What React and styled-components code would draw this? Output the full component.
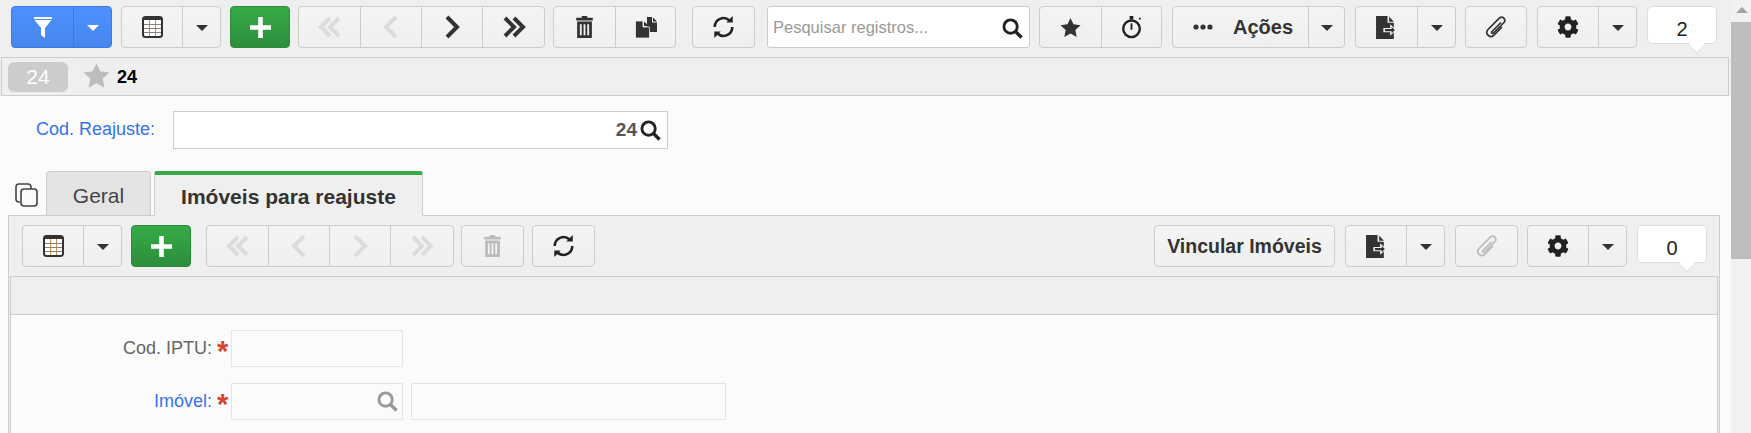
import React from "react";
import styled, { createGlobalStyle } from "styled-components";
import { FaCog } from "react-icons/fa";

const GlobalStyle = createGlobalStyle`
  html, body {
    margin: 0;
    height: 100%;
    overflow: hidden;
    background: #fbfbfb;
    font-family: "Liberation Sans", Arial, sans-serif;
  }
`;

const Page = styled.div`
  display: flex;
  height: 433px;
  overflow: hidden;
`;

const Main = styled.div`
  width: 1731px;
  flex: none;
  background: #fbfbfb;
`;

const Scrollbar = styled.div`
  position: relative;
  width: 20px;
  flex: none;
  background: #f1f1f1;
`;

const ScrollArrow = styled.div`
  position: absolute;
  top: 7px;
  left: 5px;
  border-left: 6px solid transparent;
  border-right: 6px solid transparent;
  border-bottom: 6px solid #a3a3a3;
`;

const ScrollThumb = styled.div`
  position: absolute;
  top: 22px;
  left: 0;
  width: 20px;
  height: 237px;
  background: #bdbdbd;
`;

const TopArea = styled.div`
  background: #efefef;
`;

const Toolbar = styled.div`
  display: flex;
  align-items: flex-start;
  height: ${(p) => p.$height}px;
  padding: ${(p) => p.$top}px ${(p) => p.$right || 0}px 0 ${(p) => p.$left}px;
  box-sizing: border-box;
  background: #efefef;
`;

const Group = styled.div`
  display: flex;
  flex: none;
  height: 42px;
  box-sizing: border-box;
  margin-left: ${(p) => p.$gap || 0}px;
  border: 1px solid #ccc;
  border-radius: 4px;
  background: linear-gradient(#f4f4f4, #efefef);
`;

const PushRight = styled(Group)`
  margin-left: auto;
`;

const Cell = styled.div`
  display: flex;
  align-items: center;
  justify-content: center;
  flex: none;
  width: ${(p) => p.$w}px;
  box-sizing: border-box;
  & + & {
    border-left: 1px solid #ccc;
  }
`;

const BlueGroup = styled(Group)`
  border-color: #3b78e7;
  background: linear-gradient(#4d90fe, #4787ed);
  ${Cell} + ${Cell} {
    border-left-color: #3b78e7;
  }
`;

const GreenGroup = styled(Group)`
  border-color: #2b8a3b;
  background: linear-gradient(#36aa48, #2d8e3c);
`;

const TextCell = styled(Cell)`
  gap: 20px;
  padding-left: ${(p) => p.$pad || 0}px;
  font-size: ${(p) => p.$size}px;
  font-weight: bold;
  color: #333;
`;

const Caret = styled.span`
  display: block;
  margin-top: 2px;
  border-left: 6px solid transparent;
  border-right: 6px solid transparent;
  border-top: 6px solid ${(p) => p.$color || "#333"};
`;

const SearchBox = styled.div`
  display: flex;
  align-items: center;
  justify-content: space-between;
  flex: none;
  width: 263px;
  height: 42px;
  box-sizing: border-box;
  margin-left: 12px;
  padding: 0 6px 0 5px;
  border: 1px solid #ccc;
  border-radius: 3px;
  background: #fff;
  font-size: 16.5px;
  color: #999;
`;

const SearchSlot = styled.span`
  display: flex;
  margin-top: 3px;
`;

const Counter = styled.div`
  position: relative;
  flex: none;
  display: flex;
  align-items: center;
  justify-content: center;
  width: ${(p) => p.$w}px;
  height: 38px;
  box-sizing: border-box;
  margin-left: ${(p) => p.$gap}px;
  padding-top: 9px;
  border: 1px solid #ddd;
  border-radius: 5px;
  background: #fff;
  font-size: 20px;
  color: #222;
  &::after {
    content: "";
    position: absolute;
    right: 12px;
    bottom: -9px;
    width: 13px;
    height: 13px;
    background: #fff;
    border-right: 1px solid #ddd;
    border-bottom: 1px solid #ddd;
    transform: rotate(45deg) scale(0.85);
  }
`;

const TitleBar = styled.div`
  display: flex;
  align-items: center;
  width: 1728px;
  height: 39px;
  box-sizing: border-box;
  margin-left: 1px;
  padding: 1px 0 0 6px;
  border: 1px solid #ccc;
  background: #efefef;
`;

const Badge = styled.span`
  display: flex;
  align-items: center;
  justify-content: center;
  width: 60px;
  height: 30px;
  border-radius: 6px;
  background: #ccc;
  color: #fff;
  font-size: 21px;
`;

const StarSlot = styled.span`
  display: flex;
  margin: -3px 7px 0 15px;
`;

const TitleText = styled.span`
  font-size: 18px;
  font-weight: bold;
  color: #000;
`;

const BodyArea = styled.div`
  background: #fbfbfb;
`;

const TopForm = styled.div`
  display: flex;
  align-items: center;
  padding-top: 15px;
`;

const FieldLabel = styled.label`
  flex: none;
  width: ${(p) => p.$w}px;
  text-align: right;
  font-size: 18px;
  color: ${(p) => (p.$link ? "#3572ef" : "#666")};
`;

const TopLabel = styled(FieldLabel)`
  padding-bottom: 2px;
`;

const KeyInput = styled.div`
  display: flex;
  align-items: center;
  justify-content: flex-end;
  gap: 3px;
  width: 495px;
  height: 38px;
  box-sizing: border-box;
  margin-left: 18px;
  padding-right: 6px;
  border: 1px solid #ccc;
  background: #fff;
  font-size: 19px;
  font-weight: bold;
  color: #555;
`;

const TabRow = styled.div`
  display: flex;
  align-items: flex-end;
  height: 45px;
  margin-top: 22px;
  margin-bottom: -1px;
  padding-left: 15px;
`;

const CopySlot = styled.span`
  display: flex;
  align-self: flex-end;
  margin: 0 8px 9px 0;
`;

const Tab = styled.div`
  position: relative;
  display: flex;
  align-items: center;
  justify-content: center;
  width: ${(p) => p.$w}px;
  height: 45px;
  box-sizing: border-box;
  margin-right: 3px;
  padding-top: 4px;
  border: 1px solid #ccc;
  border-radius: 3px 3px 0 0;
  font-size: 21px;
  color: #444;
  background: #e4e4e4;
`;

const ActiveTab = styled(Tab)`
  border-top: 4px solid #35aa47;
  border-bottom: 1px solid #efefef;
  background: #efefef;
  font-weight: bold;
  color: #333;
`;

const Panel = styled.div`
  width: 1712px;
  height: 300px;
  box-sizing: border-box;
  margin-left: 8px;
  border: 1px solid #ccc;
  background: #efefef;
`;

const Inner = styled.div`
  height: 200px;
  margin-left: 1px;
  margin-right: 1px;
  border-left: 1px solid #ccc;
  border-right: 1px solid #ccc;
  background: #fbfbfb;
`;

const InnerHeader = styled.div`
  height: 37px;
  border-top: 1px solid #ccc;
  border-bottom: 1px solid #ccc;
  background: #efefef;
`;

const FormGrid = styled.div`
  display: grid;
  grid-template-columns: 201px 19px auto 1fr;
  grid-auto-rows: 37px;
  row-gap: 16px;
  align-items: center;
  padding-top: 15px;
`;

const Star = styled.span`
  align-self: start;
  padding: 7px 0 0 5px;
  font-size: 29px;
  line-height: 28px;
  font-weight: bold;
  color: #d9432f;
`;

const FlatInput = styled.div`
  display: flex;
  align-items: center;
  justify-content: flex-end;
  width: ${(p) => p.$w}px;
  height: 37px;
  box-sizing: border-box;
  margin-left: ${(p) => p.$gap || 0}px;
  padding-right: 4px;
  border: 1px solid #e5e5e5;
`;

const InputPair = styled.div`
  display: flex;
  grid-column: 3 / 5;
`;

const Chevron = ({ dir = "right", double, color = "#333" }) => {
  const flip = dir === "left" ? "scale(-1 1) translate(-28 0)" : undefined;
  return (
    <svg width="28" height="26" viewBox="0 0 28 26">
      <g transform={flip} fill="none" stroke={color} strokeWidth="4">
        {double ? (
          <>
            <path d="M5 4l9 9-9 9" />
            <path d="M14 4l9 9-9 9" />
          </>
        ) : (
          <path d="M9 3l10 10-10 10" />
        )}
      </g>
    </svg>
  );
};

const FunnelIcon = () => (
  <svg width="18" height="21" viewBox="0 0 18 21">
    <path d="M0 0h18v2H0z" fill="#fff" />
    <path d="M0.500 3h17L11 11v10l-4-3v-7z" fill="#fff" />
  </svg>
);

const TableIcon = () => (
  <svg width="21" height="22" viewBox="0 0 21 22">
    <rect x="1" y="1" width="19" height="20" rx="2.500" fill="#fff" stroke="#333" strokeWidth="2" />
    <rect x="1" y="1" width="19" height="3" fill="#333" />
    <path d="M7.500 4v16M13.500 4v16" stroke="#c98f54" />
    <path d="M2 8.500h17M2 12.500h17M2 16.500h17" stroke="#8a8178" />
  </svg>
);

const PlusIcon = () => (
  <svg width="21" height="21" viewBox="0 0 21 21">
    <path d="M10.500 0v21M0 10.500h21" stroke="#fff" strokeWidth="4.600" />
  </svg>
);

const TrashIcon = ({ color = "#333" }) => (
  <svg width="17" height="24" viewBox="0 0 18 26">
    <path d="M6 3V1h6v2h6v3H0V3z" fill={color} />
    <path fillRule="evenodd" d="M1 7h16v18H1zM4 10v12h2V10zm4 0v12h2V10zm4 0v12h2V10z" fill={color} />
  </svg>
);

const CopyFilesIcon = () => (
  <svg width="22" height="21" viewBox="0 0 22 21">
    <path d="M12 0h5v5.500h5V15H12z" fill="#333" />
    <path d="M18 0.500l4 4h-4z" fill="#333" />
    <path d="M0.500 4H8v6h6.500v11H0.500z" fill="#333" stroke="#f2f2f2" strokeWidth="0.800" />
    <path d="M9 4.500l5 4.500H9z" fill="#333" />
  </svg>
);

const RefreshIcon = () => (
  <svg width="23" height="24" viewBox="0 0 24 26">
    <g fill="none" stroke="#222" strokeWidth="2.800">
      <path d="M2.500 13a9.500 9.500 0 0 1 16-7" />
      <path d="M21.500 13a9.500 9.500 0 0 1-16 7" />
    </g>
    <path d="M15 8h7V1zM9 18H2v7z" fill="#222" />
  </svg>
);

const SearchIcon = ({ color = "#222", size = 21 }) => (
  <svg width={size} height={size} viewBox="0 0 22 22">
    <circle cx="9" cy="9" r="7" fill="none" stroke={color} strokeWidth="3" />
    <path d="M14 14l6.500 6.500" stroke={color} strokeWidth="3.600" />
  </svg>
);

const StarIcon = ({ size, color }) => (
  <svg width={size} height={size} viewBox="0 0 24 24">
    <path d="M12 1l3.400 7.300 8.100 1-6 5.500 1.600 8L12 18.800 4.900 22.800l1.600-8-6-5.500 8.100-1z" fill={color} />
  </svg>
);

const StopwatchIcon = () => (
  <svg width="21" height="24" viewBox="0 0 22 26">
    <circle cx="11" cy="15" r="9" fill="none" stroke="#222" strokeWidth="2.600" />
    <path d="M11 9v7" stroke="#222" strokeWidth="2" />
    <path d="M9 1h4v4H9zM19 3h2v2h-2z" fill="#222" />
  </svg>
);

const DotsIcon = () => (
  <svg width="20" height="6" viewBox="0 0 20 6">
    <circle cx="3" cy="3" r="2.600" fill="#333" />
    <circle cx="10" cy="3" r="2.600" fill="#333" />
    <circle cx="17" cy="3" r="2.600" fill="#333" />
  </svg>
);

const ExportIcon = () => (
  <svg width="21" height="23" viewBox="0 0 20 22">
    <path d="M0 0h11v6.500h6V22H0z" fill="#333" />
    <path d="M12.500 0.500l4.500 5h-4.500z" fill="#333" />
    <path d="M7 11.500h6.500V8l6 5.500-6 5.500v-3.500H7z" fill="#f2f2f2" />
    <path d="M8.500 12.500h6.500V10.500l3 3-3 3v-2H8.500z" fill="#333" />
  </svg>
);

const ClipIcon = ({ color = "#333" }) => (
  <svg width="24" height="22" viewBox="0 0 24 22">
    <path
      d="M17 6.500L8 15.500C7 16.800 8.500 18 9.500 17L20 6.500C22.500 3.500 18.500-0.500 15.500 2L4 13.500C0.500 17.500 5.500 22.500 9.500 19.500L18 11"
      fill="none"
      stroke={color}
      strokeWidth="1.700"
    />
  </svg>
);

const CopyTabsIcon = () => (
  <svg width="23" height="24" viewBox="0 0 23 24">
    <rect x="6" y="6" width="16" height="17" rx="3" fill="#fbfbfb" stroke="#444" strokeWidth="1.600" />
    <path d="M5 19H4a3 3 0 0 1-3-3V4a3 3 0 0 1 3-3h9a3 3 0 0 1 3 3v2" fill="none" stroke="#444" strokeWidth="1.600" />
  </svg>
);

const DISABLED = "#dcdcdc";

const NavGroup = ({ gap, allOff, lastW = 61 }) => (
  <Group $gap={gap}>
    <Cell $w={61}><Chevron dir="left" double color={DISABLED} /></Cell>
    <Cell $w={61}><Chevron dir="left" color={DISABLED} /></Cell>
    <Cell $w={61}><Chevron color={allOff ? DISABLED : "#333"} /></Cell>
    <Cell $w={lastW}><Chevron double color={allOff ? DISABLED : "#333"} /></Cell>
  </Group>
);

const SplitButton = ({ gap, icon, w = 60 }) => (
  <Group $gap={gap}>
    <Cell $w={w}>{icon}</Cell>
    <Cell $w={38}><Caret /></Cell>
  </Group>
);

function App() {
  return (
    <Page>
      <GlobalStyle />
      <Main>
        <TopArea>
          <Toolbar $height={57} $top={6} $left={11}>
            <BlueGroup>
              <Cell $w={61}><FunnelIcon /></Cell>
              <Cell $w={38}><Caret $color="#fff" /></Cell>
            </BlueGroup>
            <SplitButton gap={9} icon={<TableIcon />} />
            <GreenGroup $gap={9}><Cell $w={58}><PlusIcon /></Cell></GreenGroup>
            <NavGroup gap={8} lastW={62} />
            <Group $gap={8}>
              <Cell $w={61}><TrashIcon /></Cell>
              <Cell $w={60}><CopyFilesIcon /></Cell>
            </Group>
            <Group $gap={16}><Cell $w={61}><RefreshIcon /></Cell></Group>
            <SearchBox>
              Pesquisar registros...
              <SearchSlot><SearchIcon /></SearchSlot>
            </SearchBox>
            <Group $gap={9}>
              <Cell $w={61}><StarIcon size={21} color="#333" /></Cell>
              <Cell $w={60}><StopwatchIcon /></Cell>
            </Group>
            <Group $gap={10}>
              <TextCell $w={135} $size={20} $pad={5}><DotsIcon />Ações</TextCell>
              <Cell $w={36}><Caret /></Cell>
            </Group>
            <SplitButton gap={10} w={61} icon={<ExportIcon />} />
            <Group $gap={9}><Cell $w={60}><ClipIcon /></Cell></Group>
            <SplitButton gap={10} icon={<FaCog size={22} color="#222" />} />
            <Counter $w={70} $gap={10}>2</Counter>
          </Toolbar>

          <TitleBar>
            <Badge>24</Badge>
            <StarSlot><StarIcon size={27} color="#bdbdbd" /></StarSlot>
            <TitleText>24</TitleText>
          </TitleBar>
        </TopArea>

        <BodyArea>
          <TopForm>
            <TopLabel $w={155} $link>Cod. Reajuste:</TopLabel>
            <KeyInput>24<SearchIcon /></KeyInput>
          </TopForm>

          <TabRow>
            <CopySlot><CopyTabsIcon /></CopySlot>
            <Tab $w={105}>Geral</Tab>
            <ActiveTab $w={269}>Imóveis para reajuste</ActiveTab>
          </TabRow>

          <Panel>
            <Toolbar $height={60} $top={9} $left={13} $right={12}>
              <SplitButton icon={<TableIcon />} />
              <GreenGroup $gap={9}><Cell $w={58}><PlusIcon /></Cell></GreenGroup>
              <NavGroup gap={15} allOff lastW={63} />
              <Group $gap={7}><Cell $w={61}><TrashIcon color="#bbb" /></Cell></Group>
              <Group $gap={8}><Cell $w={61}><RefreshIcon /></Cell></Group>
              <PushRight><TextCell $w={179} $size={19.5}>Vincular Imóveis</TextCell></PushRight>
              <SplitButton gap={10} icon={<ExportIcon />} />
              <Group $gap={10}><Cell $w={61}><ClipIcon color="#bbb" /></Cell></Group>
              <SplitButton gap={9} icon={<FaCog size={22} color="#222" />} />
              <Counter $w={70} $gap={10}>0</Counter>
            </Toolbar>
            <Inner>
              <InnerHeader />
              <FormGrid>
                <FieldLabel $w={201}>Cod. IPTU:</FieldLabel>
                <Star>*</Star>
                <FlatInput $w={172} />
                <span />
                <FieldLabel $w={201} $link>Imóvel:</FieldLabel>
                <Star>*</Star>
                <InputPair>
                  <FlatInput $w={172}><SearchIcon color="#999" /></FlatInput>
                  <FlatInput $w={315} $gap={8} />
                </InputPair>
              </FormGrid>
            </Inner>
          </Panel>
        </BodyArea>
      </Main>
      <Scrollbar>
        <ScrollArrow />
        <ScrollThumb />
      </Scrollbar>
    </Page>
  );
}

export default App;
